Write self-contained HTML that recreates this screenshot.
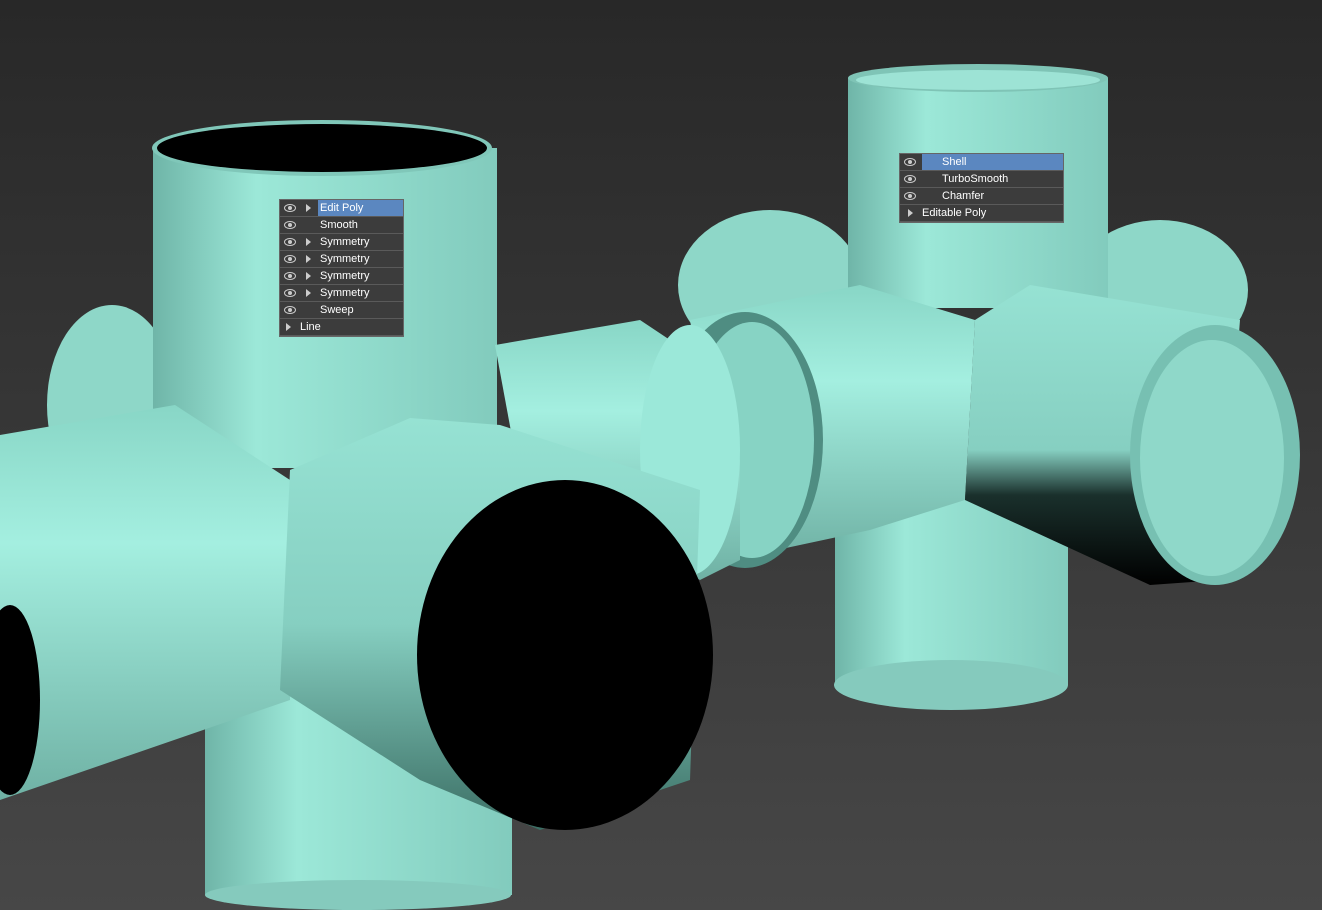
<!DOCTYPE html>
<html><head><style>
body{margin:0;width:1322px;height:910px;overflow:hidden;background:linear-gradient(#282828,#474747);font-family:"Liberation Sans",sans-serif}
svg{position:absolute;left:0;top:0}
.stk{position:absolute;background:#3c3c3c;border:1px solid #666;font-size:11px;color:#fff}
.stk div{height:16px;line-height:16px;border-bottom:1px solid #5a5a5a;position:relative;white-space:nowrap}
.eye{position:absolute;left:4px;top:4px;width:10px;height:6px;border:1px solid #ccc;border-radius:50%}
.eye:after{content:"";position:absolute;left:3px;top:1px;width:4px;height:4px;background:#ccc;border-radius:50%}
.tri{position:absolute;width:0;height:0;border-left:5px solid #ccc;border-top:4px solid transparent;border-bottom:4px solid transparent;top:4px}
</style></head><body>
<svg width="1322" height="910">
<defs>
<linearGradient id="v" x1="0" x2="1"><stop offset="0" stop-color="#6fb5a8"/><stop offset=".3" stop-color="#9ce8d8"/><stop offset="1" stop-color="#82cbbd"/></linearGradient>
<linearGradient id="h" x1="0" y1="0" x2="0" y2="1"><stop offset="0" stop-color="#88d6c6"/><stop offset=".35" stop-color="#a4efe0"/><stop offset="1" stop-color="#6fb1a4"/></linearGradient>
<linearGradient id="h2" x1="0" y1="0" x2="0" y2="1"><stop offset="0" stop-color="#96e2d3"/><stop offset=".5" stop-color="#86cfc1"/><stop offset="1" stop-color="#3b6e64"/></linearGradient>
<linearGradient id="h3" x1="0" y1="0" x2="0" y2="1"><stop offset="0" stop-color="#96e2d3"/><stop offset=".55" stop-color="#86cfc1"/><stop offset=".7" stop-color="#1a302c"/><stop offset="1" stop-color="#000"/></linearGradient>
</defs>
<ellipse cx="770" cy="285" rx="92" ry="75" fill="#8ed7c8"/>
<ellipse cx="1160" cy="290" rx="88" ry="70" fill="#8ed7c8"/>
<rect x="835" y="500" width="233" height="185" fill="url(#v)"/>
<ellipse cx="951" cy="685" rx="117" ry="25" fill="#85cabd"/>
<rect x="848" y="78" width="260" height="230" fill="url(#v)"/>
<ellipse cx="978" cy="78" rx="130" ry="14" fill="#7fc4b6"/>
<ellipse cx="978" cy="80" rx="122" ry="10" fill="#9de3d5"/>
<polygon points="690,320 860,285 975,320 965,500 870,530 730,560" fill="url(#h)"/>
<polygon points="975,320 1030,285 1240,320 1220,580 1150,585 965,500" fill="url(#h3)"/>
<ellipse cx="1215" cy="455" rx="85" ry="130" fill="#77c0b2"/>
<ellipse cx="1212" cy="458" rx="72" ry="118" fill="#8fd8c9"/>
<ellipse cx="745" cy="440" rx="78" ry="128" fill="#4f8d82"/>
<ellipse cx="752" cy="440" rx="62" ry="118" fill="#87d3c4"/>
<ellipse cx="112" cy="405" rx="65" ry="100" fill="#8ed7c8"/>
<rect x="205" y="690" width="307" height="205" fill="url(#v)"/>
<ellipse cx="358" cy="895" rx="153" ry="15" fill="#85cabd"/>
<rect x="153" y="148" width="344" height="320" fill="url(#v)"/>
<ellipse cx="322" cy="148" rx="170" ry="28" fill="#80c7b9"/>
<ellipse cx="322" cy="148" rx="165" ry="24" fill="#000"/>
<polygon points="495,345 640,320 700,360 740,460 740,560 700,580 520,480" fill="url(#h)"/>
<ellipse cx="690" cy="450" rx="50" ry="125" fill="#9be8d9"/>
<polygon points="0,435 175,405 290,480 290,700 0,800" fill="url(#h)"/>
<polygon points="290,470 410,418 500,425 700,490 690,780 540,830 420,780 280,690" fill="url(#h2)"/>
<ellipse cx="565" cy="655" rx="148" ry="175" fill="#000"/>
<ellipse cx="10" cy="700" rx="30" ry="95" fill="#000"/>
</svg>
<div class="stk" style="left:279px;top:199px;width:123px">
<div><span class="eye"></span><span class="tri" style="left:26px"></span><span style="position:absolute;left:38px;right:0;top:0;padding-left:2px;background:#5b87c0">Edit Poly</span></div>
<div><span class="eye"></span><span style="position:absolute;left:40px">Smooth</span></div>
<div><span class="eye"></span><span class="tri" style="left:26px"></span><span style="position:absolute;left:40px">Symmetry</span></div>
<div><span class="eye"></span><span class="tri" style="left:26px"></span><span style="position:absolute;left:40px">Symmetry</span></div>
<div><span class="eye"></span><span class="tri" style="left:26px"></span><span style="position:absolute;left:40px">Symmetry</span></div>
<div><span class="eye"></span><span class="tri" style="left:26px"></span><span style="position:absolute;left:40px">Symmetry</span></div>
<div><span class="eye"></span><span style="position:absolute;left:40px">Sweep</span></div>
<div><span class="tri" style="left:6px"></span><span style="position:absolute;left:20px">Line</span></div>
</div>
<div class="stk" style="left:899px;top:153px;width:163px">
<div><span class="eye"></span><span style="position:absolute;left:22px;right:0;top:0;padding-left:20px;background:#5b87c0">Shell</span></div>
<div><span class="eye"></span><span style="position:absolute;left:42px">TurboSmooth</span></div>
<div><span class="eye"></span><span style="position:absolute;left:42px">Chamfer</span></div>
<div><span class="tri" style="left:8px"></span><span style="position:absolute;left:22px">Editable Poly</span></div>
</div>
</body></html>
